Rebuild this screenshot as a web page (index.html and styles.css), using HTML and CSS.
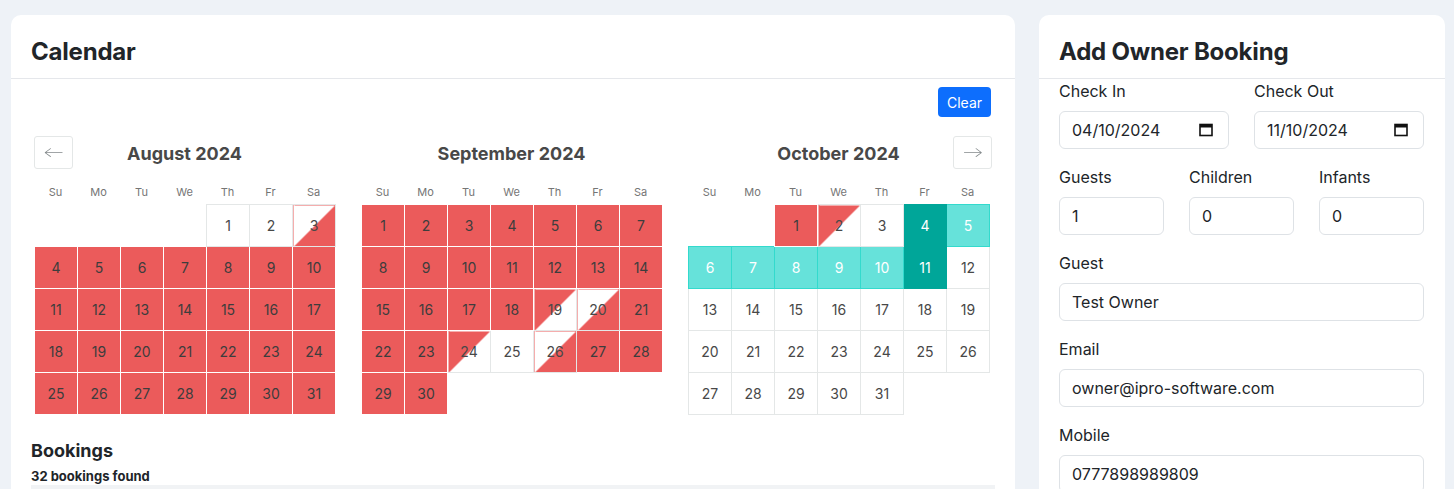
FILE: index.html
```html
<!DOCTYPE html>
<html lang="en">
<head>
<meta charset="utf-8">
<title>Calendar</title>
<link rel="stylesheet" href="styles.css">
</head>
<body>
<div class="page">
  <section class="card card-left">
    <header class="card-header"><h2>Calendar</h2></header>
    <div class="card-body">
      <div class="toolbar"><button class="btn-clear">Clear</button></div>
      <div class="calendar">
        <button class="nav nav-prev" aria-label="Previous month">
          <svg width="19" height="19" viewBox="0 0 1000 1000"><path fill="#82888a" d="M336 275L51 485c-7 6-11 12-11 19s4 13 11 19l285 210c9 7 22 5 28-4 7-9 5-22-4-28L117 524h843c11 0 20-9 20-20s-9-20-20-20H117l243-177c9-6 11-19 4-28-6-9-19-11-28-4z"/></svg>
        </button>
        <button class="nav nav-next" aria-label="Next month">
          <svg width="19" height="19" viewBox="0 0 1000 1000"><path fill="#82888a" d="M694 275l285 210c7 6 11 12 11 19s-4 13-11 19L694 733c-9 7-22 5-28-4-7-9-5-22 4-28l243-177H70c-11 0-20-9-20-20s9-20 20-20h843L670 307c-9-6-11-19-4-28 6-9 19-11 28-4z"/></svg>
        </button>

        <div class="month">
          <div class="caption">August 2024</div>
          <ul class="weekdays"><li>Su</li><li>Mo</li><li>Tu</li><li>We</li><li>Th</li><li>Fr</li><li>Sa</li></ul>
          <table class="grid">
            <tr><td class="empty"></td><td class="empty"></td><td class="empty"></td><td class="empty"></td><td class="day">1</td><td class="day">2</td><td class="day half-in">3</td></tr>
            <tr><td class="day red">4</td><td class="day red">5</td><td class="day red">6</td><td class="day red">7</td><td class="day red">8</td><td class="day red">9</td><td class="day red">10</td></tr>
            <tr><td class="day red">11</td><td class="day red">12</td><td class="day red">13</td><td class="day red">14</td><td class="day red">15</td><td class="day red">16</td><td class="day red">17</td></tr>
            <tr><td class="day red">18</td><td class="day red">19</td><td class="day red">20</td><td class="day red">21</td><td class="day red">22</td><td class="day red">23</td><td class="day red">24</td></tr>
            <tr><td class="day red">25</td><td class="day red">26</td><td class="day red">27</td><td class="day red">28</td><td class="day red">29</td><td class="day red">30</td><td class="day red">31</td></tr>
          </table>
        </div>

        <div class="month">
          <div class="caption">September 2024</div>
          <ul class="weekdays"><li>Su</li><li>Mo</li><li>Tu</li><li>We</li><li>Th</li><li>Fr</li><li>Sa</li></ul>
          <table class="grid">
            <tr><td class="day red">1</td><td class="day red">2</td><td class="day red">3</td><td class="day red">4</td><td class="day red">5</td><td class="day red">6</td><td class="day red">7</td></tr>
            <tr><td class="day red">8</td><td class="day red">9</td><td class="day red">10</td><td class="day red">11</td><td class="day red">12</td><td class="day red">13</td><td class="day red">14</td></tr>
            <tr><td class="day red">15</td><td class="day red">16</td><td class="day red">17</td><td class="day red">18</td><td class="day half-out">19</td><td class="day half-in">20</td><td class="day red">21</td></tr>
            <tr><td class="day red">22</td><td class="day red">23</td><td class="day half-out">24</td><td class="day">25</td><td class="day half-in">26</td><td class="day red">27</td><td class="day red">28</td></tr>
            <tr><td class="day red">29</td><td class="day red">30</td><td class="empty"></td><td class="empty"></td><td class="empty"></td><td class="empty"></td><td class="empty"></td></tr>
          </table>
        </div>

        <div class="month">
          <div class="caption">October 2024</div>
          <ul class="weekdays"><li>Su</li><li>Mo</li><li>Tu</li><li>We</li><li>Th</li><li>Fr</li><li>Sa</li></ul>
          <table class="grid">
            <tr><td class="empty"></td><td class="empty"></td><td class="day red">1</td><td class="day half-out">2</td><td class="day">3</td><td class="day sel">4</td><td class="day span">5</td></tr>
            <tr><td class="day span">6</td><td class="day span">7</td><td class="day span">8</td><td class="day span">9</td><td class="day span">10</td><td class="day sel">11</td><td class="day">12</td></tr>
            <tr><td class="day">13</td><td class="day">14</td><td class="day">15</td><td class="day">16</td><td class="day">17</td><td class="day">18</td><td class="day">19</td></tr>
            <tr><td class="day">20</td><td class="day">21</td><td class="day">22</td><td class="day">23</td><td class="day">24</td><td class="day">25</td><td class="day">26</td></tr>
            <tr><td class="day">27</td><td class="day">28</td><td class="day">29</td><td class="day">30</td><td class="day">31</td><td class="empty"></td><td class="empty"></td></tr>
          </table>
        </div>
      </div>

      <h3 class="bookings-title">Bookings</h3>
      <p class="bookings-count">32 bookings found</p>
      <div class="table-head"></div>
    </div>
  </section>

  <section class="card card-right">
    <header class="card-header"><h2>Add Owner Booking</h2></header>
    <div class="form">
      <div class="row row-2">
        <div class="field">
          <label>Check In</label>
          <div class="input date"><span>04/10/2024</span>
            <svg class="cal-icon" width="14" height="14" viewBox="0 0 14 14"><rect x="1" y="1.5" width="12" height="11" fill="none" stroke="#111" stroke-width="1.6"/><rect x="1" y="1.5" width="12" height="3" fill="#111"/></svg>
          </div>
        </div>
        <div class="field">
          <label>Check Out</label>
          <div class="input date"><span>11/10/2024</span>
            <svg class="cal-icon" width="14" height="14" viewBox="0 0 14 14"><rect x="1" y="1.5" width="12" height="11" fill="none" stroke="#111" stroke-width="1.6"/><rect x="1" y="1.5" width="12" height="3" fill="#111"/></svg>
          </div>
        </div>
      </div>
      <div class="row row-3">
        <div class="field"><label>Guests</label><div class="input">1</div></div>
        <div class="field"><label>Children</label><div class="input">0</div></div>
        <div class="field"><label>Infants</label><div class="input">0</div></div>
      </div>
      <div class="field"><label>Guest</label><div class="input">Test Owner</div></div>
      <div class="field"><label>Email</label><div class="input">owner@ipro-software.com</div></div>
      <div class="field"><label>Mobile</label><div class="input">0777898989809</div></div>
    </div>
  </section>
</div>
</body>
</html>
```

FILE: styles.css
```css
* { box-sizing: border-box; }
html, body { margin: 0; padding: 0; }
body {
  background: #eef2f7;
  font-family: Inter, "Noto Sans", sans-serif;
  color: #212529;
  overflow: hidden;
}
.page {
  display: flex;
  align-items: flex-start;
  gap: 24px;
  padding: 15px 9px 0 11px;
}
.card {
  background: #fff;
  border-radius: 10px;
}
.card-left { width: 1004px; height: 520px; }
.card-right { width: 406px; height: 520px; }
.card-header {
  padding: 22px 20px 12px;
  border-bottom: 1px solid #e5e7eb;
}
.card-header h2 {
  margin: 0;
  font-size: 24px;
  line-height: 29px;
  font-weight: 700;
  color: #212529;
  letter-spacing: -0.2px;
}
.card-body { padding: 8px 20px 0; }
.toolbar { display: flex; justify-content: flex-end; padding-right: 4px; }
.btn-clear {
  width: 53px;
  height: 30px;
  border: 0;
  border-radius: 4px;
  background: #0d6efd;
  color: #fff;
  font-family: inherit;
  font-size: 14px;
  padding: 0;
}
.calendar {
  position: relative;
  display: flex;
  margin: 19px 0 0 -10px;
}
.nav {
  position: absolute;
  top: 0;
  width: 39px;
  height: 33px;
  border: 1px solid #e4e7e7;
  border-radius: 3px;
  background: #fff;
  padding: 0;
  display: flex;
  align-items: center;
  justify-content: center;
}
.nav-prev { left: 13px; }
.nav-next { left: 932px; }
.month { width: 327px; padding: 0 13px; flex: none; }
.caption {
  height: 35px;
  line-height: 35px;
  text-align: center;
  font-size: 18px;
  font-weight: 700;
  color: #484848;
}
.weekdays {
  list-style: none;
  margin: 9px 0 0;
  padding: 0;
  display: flex;
  height: 24px;
  align-items: center;
}
.weekdays li {
  width: 43px;
  text-align: center;
  font-size: 11px;
  color: #757575;
}
.grid {
  border-collapse: collapse;
  border-spacing: 0;
  table-layout: fixed;
  width: 301px;
}
.grid td {
  width: 43px;
  height: 42px;
  padding: 0;
  text-align: center;
  vertical-align: middle;
  font-size: 14px;
  color: #484848;
}
.grid td.day { border: 1px solid #e4e7e7; background: #fff; }
.grid td.empty { border: 0; }
.grid td.red { background: #eb5b5b; border-color: #fff; color: #3d3d3d; }
.grid td.half-out { background: linear-gradient(to bottom right, #eb5b5b 50%, #fff 50%); }
.grid td.half-in { background: linear-gradient(to top left, #eb5b5b 50%, #fff 50%); }
.grid td.span { background: #66e2da; border-color: #33dacd; color: #fff; }
.grid td.sel { background: #00a699; border-color: #00a699; color: #fff; }
.bookings-title {
  margin: 26px 0 0;
  font-size: 18px;
  line-height: 20px;
  font-weight: 700;
  color: #212529;
}
.bookings-count {
  margin: 7px 0 0;
  font-size: 13px;
  line-height: 16px;
  font-weight: 700;
  color: #212529;
}
.table-head {
  margin-top: 1px;
  height: 40px;
  background: #f1f3f5;
}
.form { padding: 0 21px 0 20px; }
.row { display: grid; column-gap: 25px; }
.row-2 { grid-template-columns: 170px 170px; }
.row-3 { grid-template-columns: 105px 105px 105px; }
.field { margin-bottom: 16px; }
.field label {
  display: block;
  font-size: 16px;
  line-height: 24px;
  margin-bottom: 8px;
  color: #212529;
}
.input {
  position: relative;
  height: 38px;
  border: 1px solid #dee2e6;
  border-radius: 6px;
  padding: 0 12px;
  font-size: 16px;
  line-height: 36px;
  color: #212529;
}
.cal-icon {
  position: absolute;
  right: 15px;
  top: 11px;
}
```
